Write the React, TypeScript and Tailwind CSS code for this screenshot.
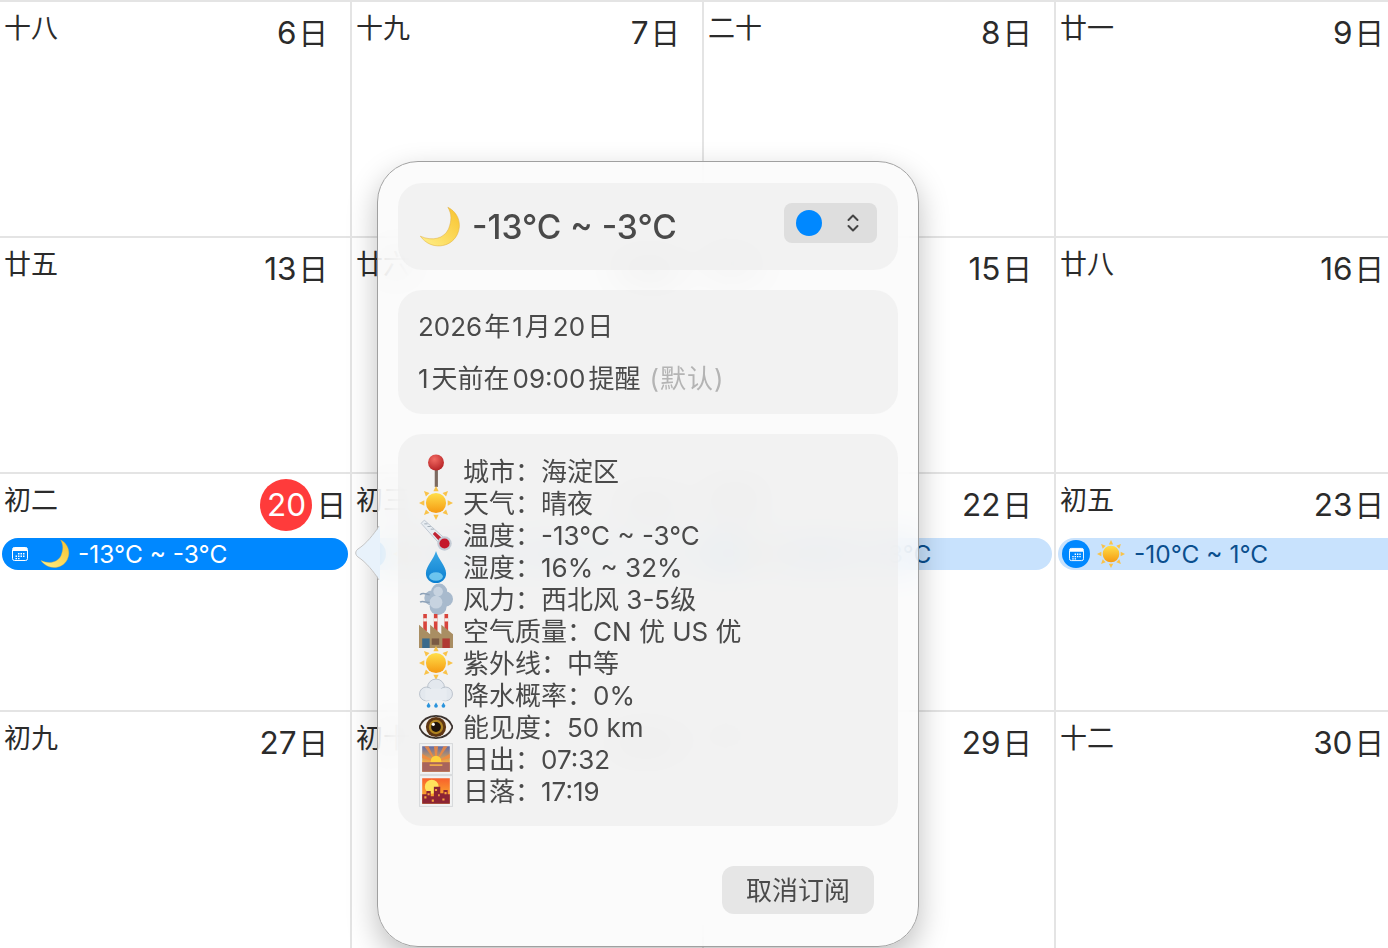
import React from "react";

const Moon = ({ size = 32 }: { size?: number }) => (
  <svg width={size} height={size} viewBox="0 0 32 32">
    <defs>
      <linearGradient id="moonFill" x1="0" y1="1" x2="1" y2="0">
        <stop offset="0" stopColor="#fff08a" />
        <stop offset="1" stopColor="#f8c22c" />
      </linearGradient>
    </defs>
    <path d="M22 1C30 5 33 14 29 22C24 32 9 34 1 23C10 27 19 25 22.500 17.500C25 11 25 6 22 1Z" fill="url(#moonFill)" stroke="#e0ae3c" strokeWidth="0.4" />
  </svg>
);

const Sun = ({ size = 34 }: { size?: number }) => (
  <svg width={size} height={size} viewBox="0 0 32 32">
    <defs>
      <linearGradient id="sunFill" x1="0" y1="0" x2="0" y2="1">
        <stop offset="0" stopColor="#ffdf4a" />
        <stop offset="1" stopColor="#f59a12" />
      </linearGradient>
    </defs>
    <g fill="#f9c34a">
      <path d="M16 0l2.500 5h-5z" />
      <path d="M16 32l2.500-5h-5z" />
      <path d="M0 16l5-2.500v5z" />
      <path d="M32 16l-5-2.500v5z" />
      <path d="M4.700 4.700l5.200 1.800-3.400 3.400z" />
      <path d="M27.300 4.700l-5.200 1.800 3.400 3.400z" />
      <path d="M4.700 27.300l5.200-1.800-3.400-3.400z" />
      <path d="M27.300 27.300l-5.200-1.800 3.400-3.400z" />
    </g>
    <circle cx="16" cy="16" r="9.500" fill="url(#sunFill)" />
  </svg>
);

const Pin = () => (
  <svg width="34" height="34" viewBox="0 0 32 32">
    <defs>
      <radialGradient id="pinFill" cx="0.4" cy="0.3" r="0.8">
        <stop offset="0" stopColor="#f26a62" />
        <stop offset="1" stopColor="#b01c20" />
      </radialGradient>
    </defs>
    <rect x="14.800" y="14" width="3" height="17" fill="#7c6a60" />
    <circle cx="16" cy="8" r="7.500" fill="url(#pinFill)" />
  </svg>
);

const Thermometer = () => (
  <svg width="34" height="34" viewBox="0 0 32 32">
    <path d="M2 5L5 2L24 19L19 24Z" fill="#e8edf2" stroke="#b8c2cc" strokeWidth="0.8" />
    <path d="M5 5.500h3M8 8h3M11 10.500h3" stroke="#98a4b0" strokeWidth="0.8" />
    <path d="M13 15L15 13L24 21L21 24Z" fill="#c02434" />
    <circle cx="24" cy="24" r="6.800" fill="#c4ccd6" />
    <circle cx="24" cy="24" r="4.800" fill="#c4182c" />
  </svg>
);

const Drop = () => (
  <svg width="34" height="34" viewBox="0 0 32 32">
    <defs>
      <linearGradient id="dropFill" x1="0" y1="0" x2="0" y2="1">
        <stop offset="0" stopColor="#3aa8e6" />
        <stop offset="1" stopColor="#0b7fd0" />
      </linearGradient>
    </defs>
    <path d="M16 1C18 9 25.500 15 25.500 22C25.500 27.500 21 31 16 31C11 31 6.500 27.500 6.500 22C6.500 15 14 9 16 1Z" fill="url(#dropFill)" />
    <ellipse cx="16" cy="25" rx="6.500" ry="4" fill="#8adaf7" opacity="0.75" />
  </svg>
);

const Wind = () => (
  <svg width="34" height="34" viewBox="0 0 32 32">
    <g fill="#a8bacd">
      <circle cx="19" cy="9" r="7.500" />
      <circle cx="25" cy="16" r="7" />
      <circle cx="18" cy="23" r="8" />
      <circle cx="12" cy="15" r="7" />
    </g>
    <g fill="#c7d3e0">
      <circle cx="18" cy="9" r="4.500" />
      <circle cx="16" cy="19" r="6" />
    </g>
    <path d="M1 12c3-3 6 0 9 0M1 19c3-2 6 1 9 0" fill="none" stroke="#8ea2b8" strokeWidth="1.400" />
  </svg>
);

const Factory = () => (
  <svg width="34" height="34" viewBox="0 0 32 32">
    <rect x="4" y="0" width="3.400" height="16" fill="#d8443c" />
    <rect x="14" y="0" width="3.400" height="16" fill="#d8443c" />
    <rect x="24" y="0" width="3.400" height="16" fill="#d8443c" />
    <rect x="4" y="4" width="3.400" height="3" fill="#f4f0ec" />
    <rect x="14" y="4" width="3.400" height="3" fill="#f4f0ec" />
    <rect x="24" y="4" width="3.400" height="3" fill="#f4f0ec" />
    <path d="M0 32V10L10.500 19V10L21 19V10L32 19V32Z" fill="#a98e63" />
    <rect x="3" y="23" width="7" height="9" fill="#3a6a8c" />
    <rect x="12" y="23" width="7" height="6" fill="#7a5a44" />
    <rect x="22" y="23" width="7" height="9" fill="#b03a34" />
  </svg>
);

const RainCloud = () => (
  <svg width="34" height="34" viewBox="0 0 32 32">
    <g fill="#e3e8ee" stroke="#b4bcc6" strokeWidth="0.8">
      <circle cx="16" cy="9" r="8" />
      <circle cx="7" cy="15" r="6.500" />
      <circle cx="25" cy="15" r="6.500" />
    </g>
    <rect x="6" y="10" width="20" height="11.200" fill="#e8ecf1" />
    <g fill="#2b94dc">
      <path d="M9 23l1.800 3.200a1.800 1.800 0 1 1-3.600 0z" />
      <path d="M16 23l1.800 3.200a1.800 1.800 0 1 1-3.600 0z" />
      <path d="M23 23l1.800 3.200a1.800 1.800 0 1 1-3.600 0z" />
    </g>
  </svg>
);

const Eye = () => (
  <svg width="34" height="34" viewBox="0 0 32 32">
    <path d="M0.500 16C5 2 27 2 31.500 16C27 30 5 30 0.500 16Z" fill="#f4f1ee" stroke="#3c3430" strokeWidth="1.800" />
    <circle cx="16" cy="16" r="9.500" fill="#5e3614" />
    <circle cx="16" cy="16" r="6.800" fill="#b08420" />
    <circle cx="16" cy="16" r="4.600" fill="#1c120c" />
    <circle cx="13.500" cy="13.500" r="1.500" fill="#fff" />
  </svg>
);

const Sunrise = () => (
  <svg width="34" height="32" viewBox="0 0 32 30">
    <defs>
      <linearGradient id="dawnFill" x1="0" y1="0" x2="0" y2="1">
        <stop offset="0" stopColor="#5e6ba8" />
        <stop offset="0.65" stopColor="#fbae3c" />
      </linearGradient>
    </defs>
    <rect x="0.500" y="0.500" width="31" height="29" fill="#f2f3f4" stroke="#d8dadc" />
    <rect x="3" y="3" width="26" height="24" fill="url(#dawnFill)" />
    <path d="M16 18L5 3H9ZM16 18L14 3H18ZM16 18L23 3H27ZM16 18L3 10V14ZM16 18L29 10V14Z" fill="#f98a3a" opacity="0.8" />
    <circle cx="16" cy="17" r="5" fill="#ffd23c" />
    <rect x="3" y="18" width="26" height="9" fill="#a8645c" />
    <rect x="10" y="20" width="12" height="1.500" fill="#f6b24a" />
  </svg>
);

const City = () => (
  <svg width="34" height="32" viewBox="0 0 32 30">
    <defs>
      <linearGradient id="duskFill" x1="0" y1="0" x2="0" y2="1">
        <stop offset="0" stopColor="#f8602c" />
        <stop offset="1" stopColor="#fbc62e" />
      </linearGradient>
    </defs>
    <rect x="0.500" y="0.500" width="31" height="29" fill="#f2f3f4" stroke="#d8dadc" />
    <rect x="3" y="3" width="26" height="24" fill="url(#duskFill)" />
    <circle cx="12" cy="11" r="6.500" fill="#ffe35c" />
    <path d="M3 27V18H7V15H11V20H14V11H20V17H23V14H27V18H29V27Z" fill="#8c2434" />
    <path d="M5 20h2v2H5zM8 17h2v2H8zM15 13h2v2h-2zM18 18h1.500v2H18zM24 16h2v2h-2zM12 23h2v2h-2zM22 22h2v2h-2z" fill="#f6a23c" />
  </svg>
);

// small white calendar used at the start of each all-day event
const CalendarGlyph = ({ size = 16 }: { size?: number }) => (
  <svg width={size} height={size} viewBox="0 0 16 16">
    <rect x="0.500" y="1.500" width="15" height="13" rx="2" fill="none" stroke="#fff" />
    <path d="M1 2.500a1 1 0 0 1 1-1h12a1 1 0 0 1 1 1V5H1z" fill="#fff" />
    <path d="M6 7h1.500v1.500H6zM8.500 7H10v1.500H8.500zM11 7h1.500v1.500H11zM3.500 9.500H5V11H3.500zM6 9.500h1.500V11H6zM8.500 9.500H10V11H8.500zM11 9.500h1.500V11H11zM6 12h1.500v1.200H6zM3.500 12H5v1.200H3.500z" fill="#fff" />
  </svg>
);

const EventBar = ({ icon, text, selected, kind }: { icon: React.ReactNode; text: string; selected?: boolean; kind: "first" | "mid" | "behind" | "last" }) => (
  <div
    className={
      selected
        ? "mx-[2px] h-8 rounded-full bg-[#0088ff] flex items-center text-white"
        : kind === "last"
          ? "ml-[2px] h-8 rounded-l-full bg-[#c8e2fd] flex items-center text-[#0b4f8e]"
          : kind === "behind"
            ? "mx-[2px] h-8 rounded-full bg-[#c8e2fd] flex items-center text-[#0b4f8e] [clip-path:inset(0_0_0_24px)]"
            : "mx-[2px] h-8 rounded-full bg-[#c8e2fd] flex items-center text-[#0b4f8e]"
    }
  >
    <div className={selected ? "w-[36px] mr-[2px] flex justify-center shrink-0" : "ml-[4px] mr-[7px] w-[28px] h-[28px] rounded-full bg-[#0088ff] flex items-center justify-center shrink-0"}>
      <CalendarGlyph size={selected ? 16 : 15} />
    </div>
    <div className="shrink-0">{icon}</div>
    <span className={selected ? "ml-[8px] text-[24.500px] leading-8 whitespace-nowrap" : "ml-[9px] text-[24.500px] leading-8 whitespace-nowrap"}>{text}</span>
  </div>
);

const DayCell = ({ lunar, day, today, last, lineRight = true, children }: { lunar: string; day: string; today?: boolean; last?: boolean; lineRight?: boolean; children?: React.ReactNode }) => (
  <div className={lineRight ? "border-t-2 border-r-2 border-[#e4e4e4] flex flex-col min-w-0" : "border-t-2 border-[#e4e4e4] flex flex-col min-w-0"}>
    <div className={today || last ? "flex justify-between pl-[4px] pr-[4px] h-[64px]" : "flex justify-between pl-[4px] pr-[22px] h-[64px]"}>
      <span className="text-[27px] leading-[36px] mt-[9px] text-[#2b2b2b]">{lunar}</span>
      <span className="flex items-center h-[52px] mt-[5px] text-[31.500px] text-[#2b2b2b]">
        {today ? (
          <span className="w-[52px] h-[52px] mr-[4px] rounded-full bg-[#ff3b3b] text-white flex items-center justify-center">{day}</span>
        ) : (
          <span className="mr-[2px]">{day}</span>
        )}
        <span className="text-[29.500px]">日</span>
      </span>
    </div>
    {children}
  </div>
);

const detailRows: { icon: React.ReactNode; label: string; value: string }[] = [
  { icon: <Pin />, label: "城市：", value: "海淀区" },
  { icon: <Sun />, label: "天气：", value: "晴夜" },
  { icon: <Thermometer />, label: "温度：", value: "-13°C ~ -3°C" },
  { icon: <Drop />, label: "湿度：", value: "16% ~ 32%" },
  { icon: <Wind />, label: "风力：", value: "西北风 3-5级" },
  { icon: <Factory />, label: "空气质量：", value: "CN 优 US 优" },
  { icon: <Sun />, label: "紫外线：", value: "中等" },
  { icon: <RainCloud />, label: "降水概率：", value: "0%" },
  { icon: <Eye />, label: "能见度：", value: "50 km" },
  { icon: <Sunrise />, label: "日出：", value: "07:32" },
  { icon: <City />, label: "日落：", value: "17:19" },
];

const WeatherPopover = () => (
  <div className="absolute left-[377px] top-[161px] w-[542px] h-[786px]">
    <div className="w-full h-full rounded-[41px] border border-[#a0a0a0] bg-[#fafafa]/80 backdrop-blur-[18px] shadow-[0_12px_30px_rgba(0,0,0,0.25)] px-[20px] pt-[21px] flex flex-col text-[#4a4a4a]">
      <div className="h-[87px] rounded-[24px] bg-[#ececec]/60 flex items-center pl-[21px] pr-[21px]">
        <Moon size={42} />
        <span className="ml-[11px] pt-[1px] text-[33.500px] font-medium">-13°C ~ -3°C</span>
        <div className="ml-auto mb-[8px] w-[93px] h-[40px] rounded-[8px] bg-[#dedede] flex items-center pl-[12px]">
          <span className="w-[26px] h-[26px] rounded-full bg-[#0088ff]" />
          <svg className="ml-[24px]" width="14" height="24" viewBox="0 0 14 24">
            <path d="M2.500 9L7 4.500L11.500 9M2.500 15L7 19.500L11.500 15" fill="none" stroke="#444" strokeWidth="2" strokeLinecap="round" strokeLinejoin="round" />
          </svg>
        </div>
      </div>

      <div className="mt-[20px] h-[124px] rounded-[24px] bg-[#ececec]/60 px-[20px] pt-[19px] text-[26px] leading-[36px] flex flex-col gap-[16px]">
        <div className="flex">
          <span>2026</span>
          <span className="mx-[2px]">年</span>
          <span>1</span>
          <span className="mx-[2px]">月</span>
          <span>20</span>
          <span className="ml-[2px]">日</span>
        </div>
        <div className="flex">
          <span>1</span>
          <span className="mx-[3px]">天前在</span>
          <span>09:00</span>
          <span className="ml-[3px]">提醒</span>
          <span className="ml-[9px] text-[#b4b4b4] tracking-[1px]">(默认)</span>
        </div>
      </div>

      <div className="mt-[20px] h-[392px] rounded-[24px] bg-[#ececec]/60 pl-[21px] pt-[21px] text-[26px] leading-[32px]">
        {detailRows.map((row) => (
          <div key={row.label} className="flex items-center h-[32px]">
            <span className="w-[34px] h-[32px] flex items-center justify-center shrink-0">{row.icon}</span>
            <span className="ml-[10px] pt-[1px] whitespace-nowrap">
              {row.label}
              {row.value}
            </span>
          </div>
        ))}
      </div>

      <div className="mt-[40px] flex justify-end pr-[24px]">
        <button className="w-[152px] h-[48px] rounded-[12px] bg-[#e6e6e6] text-[26px] text-[#4a4a4a]">取消订阅</button>
      </div>
    </div>
    {/* arrow pointing at the selected event, sits over the panel border */}
    <div className="absolute left-[-22px] top-[365px] w-[25px] h-[54px] bg-[#e8f2fb] [clip-path:path('M25_0C19_8_11_18_3_23C0_25_0_29_3_31C11_36_19_46_25_54Z')]" />
    <svg className="absolute left-[-22px] top-[365px]" width="25" height="54" viewBox="0 0 25 54">
      <path d="M24 0C19 8 11 18 3 23C0 25 0 29 3 31C11 36 19 46 24 54" fill="none" stroke="#c4c4c4" />
    </svg>
  </div>
);

export default function App() {
  return (
    <div className="relative w-[1388px] h-[948px] overflow-hidden bg-white font-[Inter,'Noto_Sans_CJK_SC',sans-serif]">
      <div className="grid w-full h-full grid-cols-[352px_352px_352px_332px] grid-rows-[236px_236px_238px_1fr]">
        <DayCell lunar="十八" day="6" />
        <DayCell lunar="十九" day="7" />
        <DayCell lunar="二十" day="8" />
        <DayCell lunar="廿一" day="9" last lineRight={false} />

        <DayCell lunar="廿五" day="13" />
        <DayCell lunar="廿六" day="14" />
        <DayCell lunar="廿七" day="15" />
        <DayCell lunar="廿八" day="16" last lineRight={false} />

        <DayCell lunar="初二" day="20" today>
          <EventBar selected kind="first" icon={<Moon size={30} />} text="-13°C ~ -3°C" />
        </DayCell>
        <DayCell lunar="初三" day="21">
          <EventBar kind="behind" icon={<Sun size={28} />} text="-13°C ~ -3°C" />
        </DayCell>
        <DayCell lunar="初四" day="22">
          <EventBar kind="mid" icon={<Sun size={28} />} text="-13°C ~ -3°C" />
        </DayCell>
        <DayCell lunar="初五" day="23" last lineRight={false}>
          <EventBar kind="last" icon={<Sun size={28} />} text="-10°C ~ 1°C" />
        </DayCell>

        <DayCell lunar="初九" day="27" />
        <DayCell lunar="初十" day="28" />
        <DayCell lunar="十一" day="29" />
        <DayCell lunar="十二" day="30" last lineRight={false} />
      </div>
      <WeatherPopover />
    </div>
  );
}
